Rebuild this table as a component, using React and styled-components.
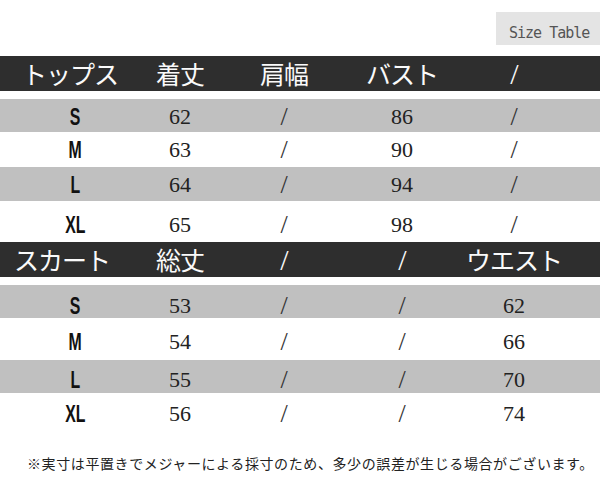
import styled, { createGlobalStyle } from "styled-components";

const GlobalStyle = createGlobalStyle`
  html, body {
    margin: 0;
    padding: 0;
    background: #fff;
  }
`;

const Page = styled.div`
  width: 600px;
  height: 486px;
  display: flex;
  flex-direction: column;
  background: #fff;
  overflow: hidden;
`;

const TagRow = styled.div`
  display: flex;
  justify-content: flex-end;
  padding-top: 12px;
  margin-bottom: 11px;
`;

const SizeTag = styled.div`
  width: 104px;
  height: 33px;
  box-sizing: border-box;
  padding: 12px 0 0 13px;
  background: #e4e4e4;
  color: #555;
  font-family: "DejaVu Sans Mono", monospace;
  font-size: 15px;
  line-height: 18px;
  letter-spacing: -1px;
  white-space: nowrap;
`;

const Row = styled.div`
  display: grid;
  grid-template-columns: 150px 60px 148px 88px 136px 1fr;
  align-items: center;
  box-sizing: border-box;
  height: ${(p) => p.$h}px;
  padding-top: ${(p) => (p.$shift || 0) * 2}px;
  background: ${(p) => (p.$shade ? "#c0c0c0" : "#fff")};
`;

const HeadRow = styled(Row)`
  background: #2e2e2e;
  margin-bottom: 8px;
  color: #fafafa;
  font-family: "Noto Sans CJK JP", sans-serif;
  font-size: 25px;
  line-height: 35px;
`;

const HeadLabel = styled.span`
  justify-self: start;
  padding-left: ${(p) => p.$indent}px;
  letter-spacing: -1px;
`;

const HeadCell = styled.span`
  justify-self: center;
  letter-spacing: -1px;
  font-family: ${(p) =>
    p.$thin ? '"Liberation Serif", serif' : '"Noto Sans CJK JP", sans-serif'};
  font-size: ${(p) => (p.$thin ? 30 : 25)}px;
`;

const SizeCell = styled.span`
  justify-self: center;
  font-family: "Liberation Sans", Arial, sans-serif;
  font-weight: bold;
  font-size: 24px;
  line-height: 24px;
  color: #111;
  transform: scaleX(0.66);
`;

const ValueCell = styled.span`
  justify-self: center;
  font-family: "Liberation Serif", "Times New Roman", serif;
  font-size: ${(p) => (p.$slash ? 26 : 22)}px;
  line-height: 26px;
  color: ${(p) => (p.$slash ? "#333" : "#222")};
`;

const Note = styled.p`
  margin: 18px 0 0;
  padding-left: 27px;
  font-family: "Noto Sans CJK JP", sans-serif;
  font-size: 14px;
  line-height: 20px;
  letter-spacing: 0.6px;
  color: #222;
  white-space: nowrap;
`;

const tables = [
  {
    indent: 22,
    head: ["トップス", "着丈", "肩幅", "バスト", "/"],
    rows: [
      { size: "S", vals: ["62", "/", "86", "/"], h: 33, shift: 1 },
      { size: "M", vals: ["63", "/", "90", "/"], h: 35, shift: 0 },
      { size: "L", vals: ["64", "/", "94", "/"], h: 34, shift: 1 },
      { size: "XL", vals: ["65", "/", "98", "/"], h: 41, shift: 3 },
    ],
  },
  {
    indent: 14,
    head: ["スカート", "総丈", "/", "/", "ウエスト"],
    rows: [
      { size: "S", vals: ["53", "/", "/", "62"], h: 33, shift: 4 },
      { size: "M", vals: ["54", "/", "/", "66"], h: 42, shift: 3 },
      { size: "L", vals: ["55", "/", "/", "70"], h: 33, shift: 3 },
      { size: "XL", vals: ["56", "/", "/", "74"], h: 42, shift: 0 },
    ],
  },
];

const SizeTable = ({ table }) => (
  <>
    <HeadRow $h={35}>
      <HeadLabel $indent={table.indent}>{table.head[0]}</HeadLabel>
      {table.head.slice(1).map((t, i) => (
        <HeadCell key={i} $thin={t === "/"}>
          {t}
        </HeadCell>
      ))}
    </HeadRow>
    {table.rows.map((r, i) => (
      <Row key={r.size} $h={r.h} $shift={r.shift} $shade={i % 2 === 0}>
        <SizeCell>{r.size}</SizeCell>
        {r.vals.map((v, j) => (
          <ValueCell key={j} $slash={v === "/"}>
            {v}
          </ValueCell>
        ))}
      </Row>
    ))}
  </>
);

const App = () => {
  return (
    <Page>
      <GlobalStyle />
      <TagRow>
        <SizeTag>Size Table</SizeTag>
      </TagRow>
      {tables.map((t, i) => (
        <SizeTable key={i} table={t} />
      ))}
      <Note>
        ※実寸は平置きでメジャーによる採寸のため、多少の誤差が生じる場合がございます。
      </Note>
    </Page>
  );
};

export default App;
